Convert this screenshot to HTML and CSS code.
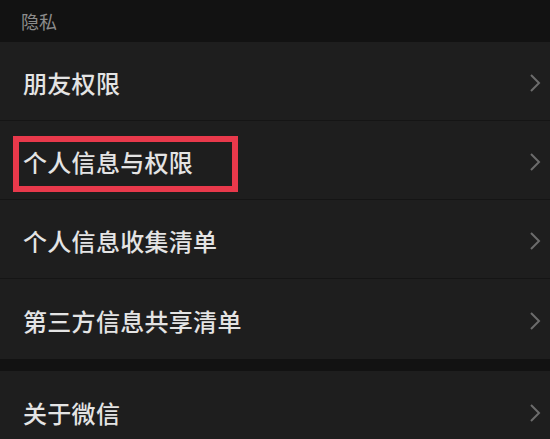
FILE: index.html
```html
<!DOCTYPE html>
<html lang="zh-CN">
<head>
    <meta charset="UTF-8">
    <meta name="viewport" content="width=device-width, initial-scale=1.0">
    <title>隐私</title>
    <link rel="stylesheet" href="styles.css">
</head>
<body>
    <div class="settings">
        <div class="section-title">隐私</div>
        <div class="group">
            <div class="row">
                <span class="label">朋友权限</span>
                <svg class="chevron" viewBox="0 0 12 20"><path d="M2 2 L10 10 L2 18"/></svg>
            </div>
            <div class="row">
                <span class="label">个人信息与权限</span>
                <svg class="chevron" viewBox="0 0 12 20"><path d="M2 2 L10 10 L2 18"/></svg>
                <div class="highlight"></div>
            </div>
            <div class="row">
                <span class="label">个人信息收集清单</span>
                <svg class="chevron" viewBox="0 0 12 20"><path d="M2 2 L10 10 L2 18"/></svg>
            </div>
            <div class="row">
                <span class="label">第三方信息共享清单</span>
                <svg class="chevron" viewBox="0 0 12 20"><path d="M2 2 L10 10 L2 18"/></svg>
            </div>
        </div>
        <div class="group">
            <div class="row">
                <span class="label">关于微信</span>
                <svg class="chevron" viewBox="0 0 12 20"><path d="M2 2 L10 10 L2 18"/></svg>
            </div>
        </div>
    </div>
</body>
</html>
```

FILE: styles.css
```css
body {
    margin: 0;
    background: #121212;
    font-family: 'Noto Sans CJK SC', 'Noto Sans', sans-serif;
}

.settings {
    width: 550px;
    height: 439px;
    overflow: hidden;
}

.section-title {
    height: 42px;
    padding-left: 21px;
    display: flex;
    align-items: center;
    font-size: 18px;
    color: #8c8c8c;
    background: #121212;
}

.group {
    background: #1e1e1e;
    margin-bottom: 12px;
}

.row {
    position: relative;
    height: 79px;
    display: flex;
    align-items: center;
    justify-content: space-between;
    padding: 3px 9px 0 23px;
    box-sizing: border-box;
    border-bottom: 1px solid #151515;
}

.row:last-child {
    border-bottom: none;
    height: 80px;
}

.label {
    font-size: 24px;
    font-weight: 500;
    color: #e4e4e4;
    letter-spacing: 0.3px;
}

.chevron {
    width: 12px;
    height: 20px;
    fill: none;
    stroke: #6c6c6c;
    stroke-width: 2;
}

.highlight {
    position: absolute;
    left: 13px;
    top: 15px;
    width: 225px;
    height: 56px;
    border: 6px solid #e8394b;
    box-sizing: border-box;
}
```
